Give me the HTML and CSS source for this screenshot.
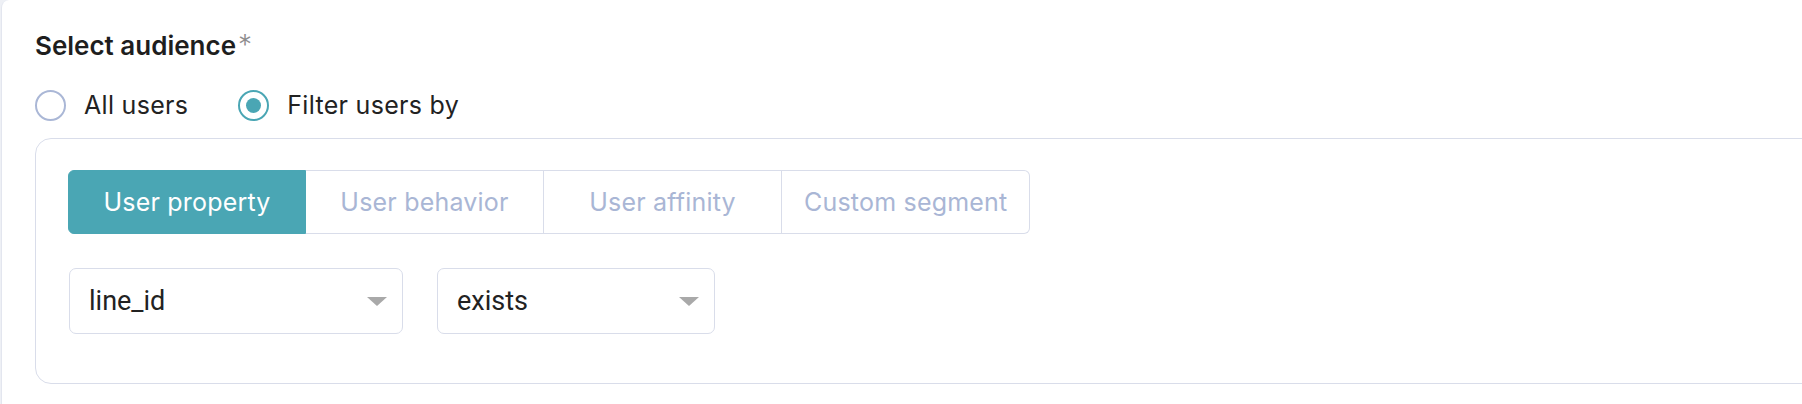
FILE: index.html
```html
<!DOCTYPE html>
<html lang="en">
<head>
<meta charset="utf-8">
<title>Select audience</title>
<link rel="stylesheet" href="styles.css">
</head>
<body>
<div class="card">
  <div class="field-label">Select audience<span class="req">*</span></div>
  <div class="radios">
    <label class="radio"><span class="radio-circle"></span><span class="radio-text">All users</span></label>
    <label class="radio radio-checked"><span class="radio-circle"><span class="radio-dot"></span></span><span class="radio-text">Filter users by</span></label>
  </div>
  <div class="filter-box">
    <div class="tabs">
      <div class="tab tab-active">User property</div>
      <div class="tab">User behavior</div>
      <div class="tab">User affinity</div>
      <div class="tab">Custom segment</div>
    </div>
    <div class="selects">
      <div class="select select-prop"><span class="select-value">line_id</span><span class="caret"></span></div>
      <div class="select select-op"><span class="select-value">exists</span><span class="caret"></span></div>
    </div>
  </div>
</div>
</body>
</html>
```
FILE: styles.css
```css
html, body {
  margin: 0;
  padding: 0;
  height: 100%;
  overflow: hidden;
}
body {
  background: #eef0f5;
  font-family: "Inter", "Lato", "Liberation Sans", sans-serif;
  color: #1f1f1f;
}
.card {
  margin-left: 1px;
  height: 404px;
  box-sizing: border-box;
  background: #ffffff;
  border-left: 1px solid #e3e6ef;
  border-top-left-radius: 8px;
  padding: 28px 0 0 33px;
  overflow: hidden;
}
.field-label {
  font-size: 26px;
  line-height: 34px;
  font-weight: 600;
  color: #1e1e1e;
}
.req {
  font-weight: 300;
  font-size: 28px;
  color: #8e8e8e;
  margin-left: 2px;
}
.radios {
  display: flex;
  align-items: center;
  height: 32px;
  margin-top: 26px;
  gap: 50px;
}
.radio {
  display: flex;
  align-items: center;
  gap: 18px;
  font-size: 25px;
  letter-spacing: 0.3px;
  color: #222;
}
.radio-circle {
  width: 31px;
  height: 31px;
  box-sizing: border-box;
  border: 2px solid #aab7d6;
  border-radius: 50%;
  display: flex;
  align-items: center;
  justify-content: center;
}
.radio-checked .radio-circle {
  border-color: #4aa6b4;
}
.radio-dot {
  width: 15px;
  height: 15px;
  border-radius: 50%;
  background: #4aa6b4;
}
.filter-box {
  margin-top: 17px;
  margin-right: -60px;
  border: 1px solid #d9ddea;
  border-radius: 16px;
  padding: 31px 32px 49px;
}
.tabs {
  display: flex;
}
.tab {
  height: 64px;
  box-sizing: border-box;
  min-width: 238px;
  padding: 0 19px;
  display: flex;
  align-items: center;
  justify-content: center;
  font-size: 25px;
  letter-spacing: 0.2px;
  color: #a9b6d5;
  border: 1px solid #d9ddea;
  border-left: none;
  background: #fff;
}
.tab:first-child {
  border-left: 1px solid #d9ddea;
  border-radius: 6px 0 0 6px;
}
.tab:last-child {
  border-radius: 0 6px 6px 0;
  padding: 0 22px;
}
.tab-active {
  background: #4aa6b4;
  border-color: #4aa6b4;
  color: #ffffff;
}
.tab.tab-active:first-child {
  border-left-color: #4aa6b4;
}
.selects {
  display: flex;
  gap: 34px;
  margin-top: 34px;
  margin-left: 1px;
}
.select {
  height: 66px;
  box-sizing: border-box;
  border: 1px solid #d9ddea;
  border-radius: 7px;
  display: flex;
  align-items: center;
  justify-content: space-between;
  padding: 0 15px 0 19px;
  font-family: "Roboto", "Liberation Sans", sans-serif;
  font-size: 27px;
  color: #222;
}
.select-prop { width: 334px; }
.select-op { width: 278px; }
.caret {
  width: 0;
  height: 0;
  border-left: 10px solid transparent;
  border-right: 10px solid transparent;
  border-top: 9px solid #a9a9a9;
}
```
